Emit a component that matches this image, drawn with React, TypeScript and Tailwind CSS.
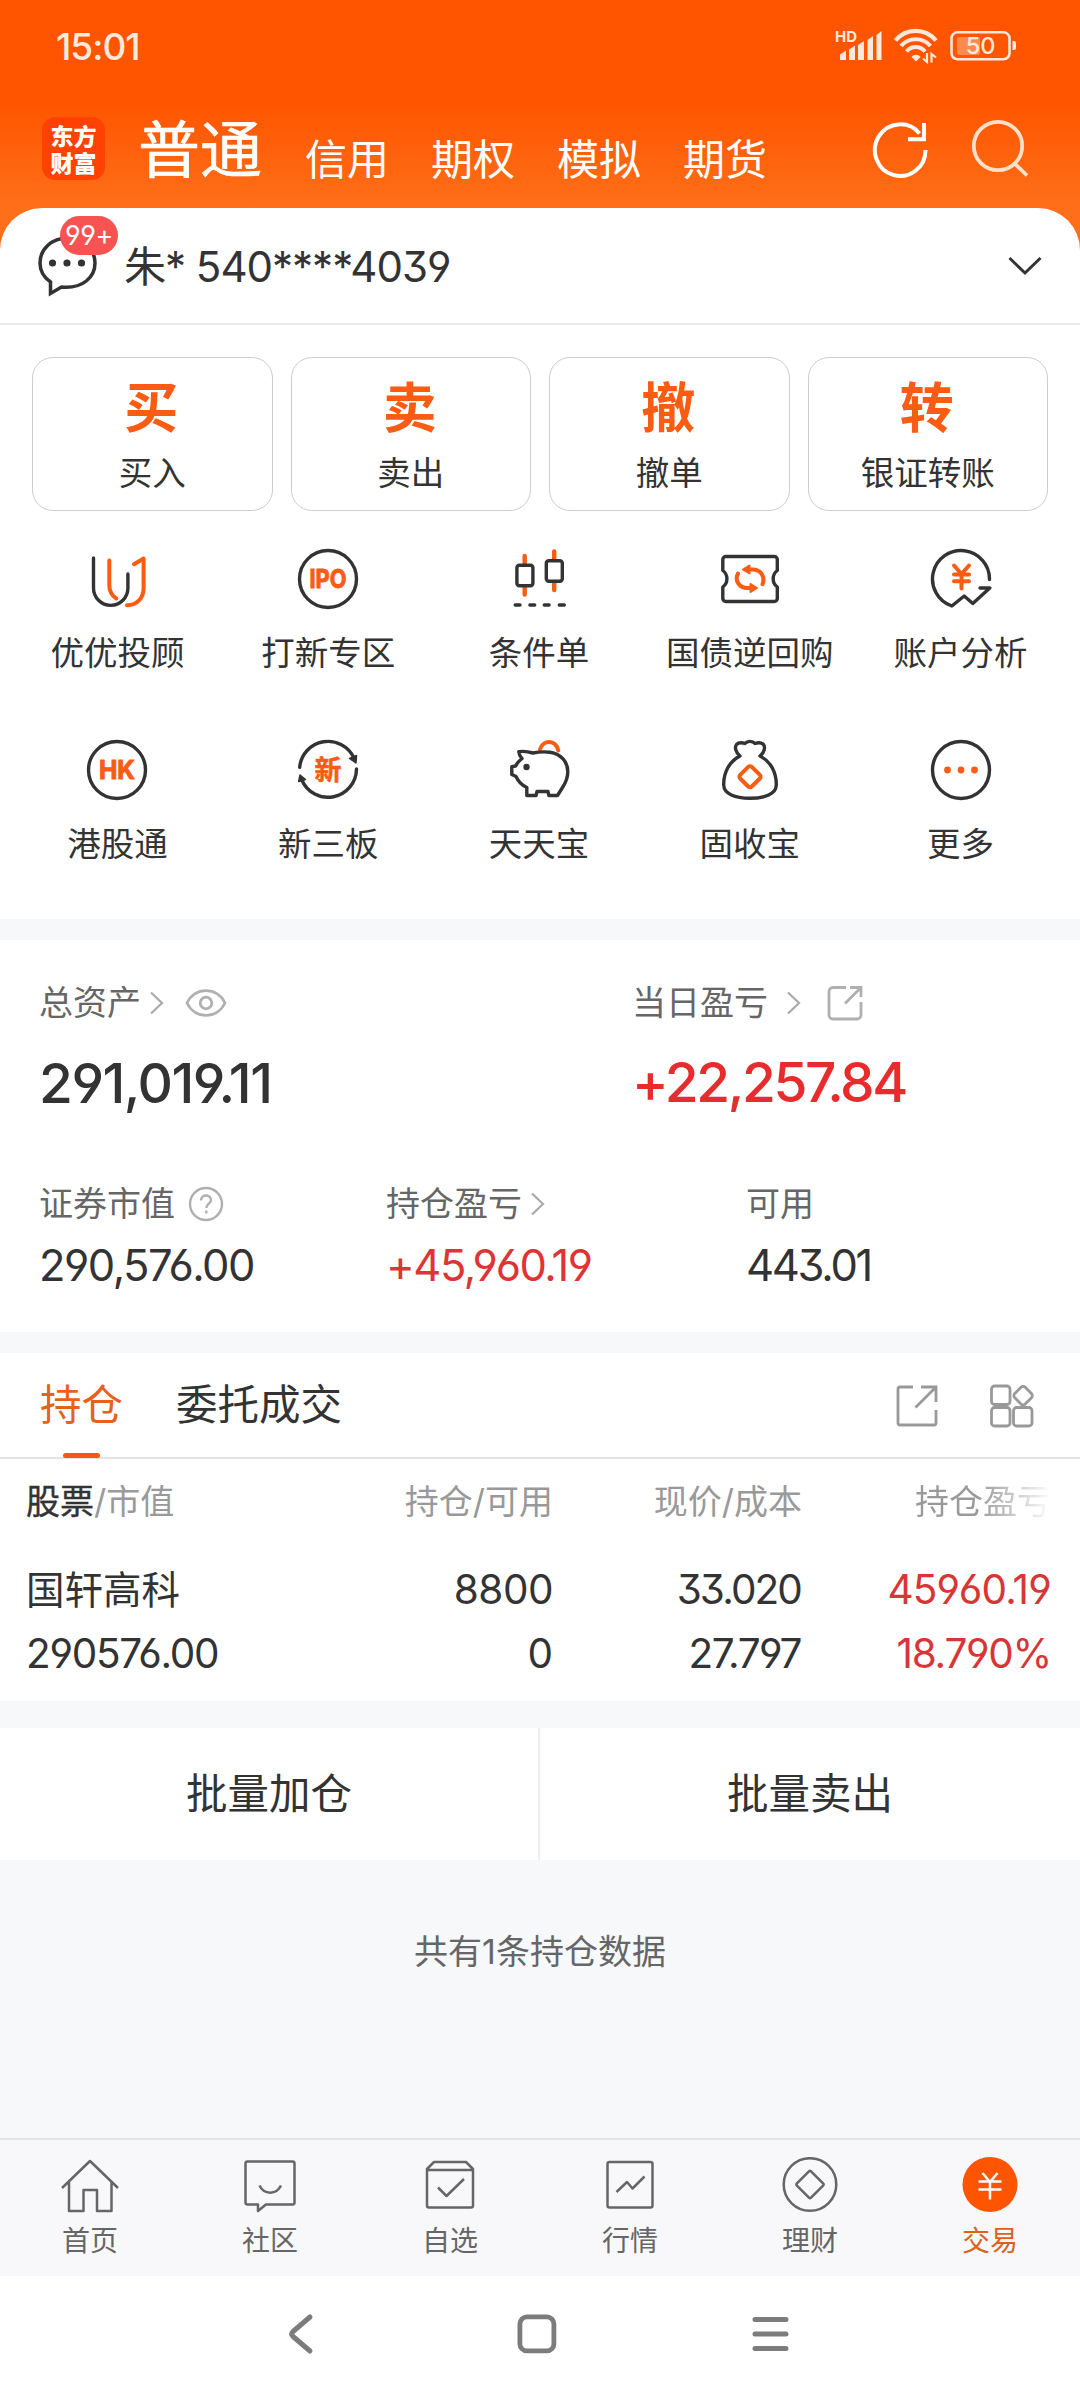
import type { ReactNode } from 'react';

const DARK = '#333333';
const ORANGE = '#f95c12';

const accountTabs = ['信用', '期权', '模拟', '期货'];

const mainActions = [
  { glyph: '买', label: '买入' },
  { glyph: '卖', label: '卖出' },
  { glyph: '撤', label: '撤单' },
  { glyph: '转', label: '银证转账' },
];

const Icon = ({ children }: { children: ReactNode }) => (
  <svg
    width="64"
    height="64"
    viewBox="0 0 64 64"
    fill="none"
    stroke={DARK}
    strokeWidth="3.4"
    strokeLinecap="round"
    strokeLinejoin="round"
  >
    {children}
  </svg>
);

const AdvisorIcon = () => (
  <Icon>
    <path d="M8.5 11V41a17.2 17.4 0 0 0 34.4 0V27" />
    <path d="M24.3 13.5V38c0 6 2.5 10.5 7 13.5" stroke={ORANGE} strokeWidth="4" />
    <path d="M42 58.3C52 58.5 58.6 51 58.6 41V11.5L49 17.2" stroke={ORANGE} strokeWidth="4" />
  </Icon>
);

const IpoIcon = () => (
  <Icon>
    <circle cx="32" cy="32" r="28.5" />
    <text
      x="32"
      y="41"
      textAnchor="middle"
      textLength="37"
      lengthAdjust="spacingAndGlyphs"
      fill={ORANGE}
      stroke={ORANGE}
      strokeWidth="1"
      className="font-['Inter'] text-[26px] font-bold"
    >
      IPO
    </text>
  </Icon>
);

const ConditionIcon = () => (
  <Icon>
    <path d="M17.7 9V17M17.7 40V47.5M47.2 4.5V12M47.2 36V43" stroke={ORANGE} strokeWidth="4.4" />
    <rect x="9.9" y="18.3" width="16" height="20.5" rx="2.5" />
    <rect x="39.3" y="13.8" width="16" height="20.5" rx="2.5" />
    <path d="M8.2 58H13M22.9 58H27.7M37.3 58H42.1M52.3 58H57.3" />
  </Icon>
);

const BondIcon = () => (
  <Icon>
    <path d="M4.8 12.5a3 3 0 0 1 3-3H56.3a3 3 0 0 1 3 3V23.5c-5.5 4-5.5 12.5 0 16.5V51.5a3 3 0 0 1-3 3H7.8a3 3 0 0 1-3-3V40c5.5-4 5.5-12.5 0-16.5Z" />
    <path d="M28 22.5H34.5C43 22.5 47.5 30 44.5 37.2" stroke={ORANGE} strokeWidth="4" />
    <path d="M36 41H29.5C21 41 16.5 33.5 20 26.5" stroke={ORANGE} strokeWidth="4" />
    <path d="M25 22.5L31.5 18.5V26.5ZM39 41L32.5 37V45Z" fill={ORANGE} stroke={ORANGE} strokeWidth="2" />
  </Icon>
);

const AnalysisIcon = () => (
  <Icon>
    <path d="M60.5 32.5A28.5 28.5 0 1 0 22.8 59L35.2 49L43.8 56.5L60.8 41H51" />
    <path d="M25 18.5L32.5 27L40 18.5M25 27.5H40M25 34.2H40M32.5 27V41.5" stroke={ORANGE} strokeWidth="4" />
  </Icon>
);

const HkIcon = () => (
  <Icon>
    <circle cx="32" cy="32" r="28.5" />
    <text
      x="32"
      y="41"
      textAnchor="middle"
      textLength="36"
      lengthAdjust="spacingAndGlyphs"
      fill={ORANGE}
      stroke={ORANGE}
      strokeWidth="1"
      className="font-['Inter'] text-[26px] font-bold"
    >
      HK
    </text>
  </Icon>
);

const NewBoardIcon = () => (
  <Icon>
    <path d="M3.7 29.3A28.5 28.5 0 0 1 58 20M60.5 31A28.5 28.5 0 0 1 5.8 42" />
    <path d="M53.5 20.5L60.5 17.5L60 25ZM2.7 43.5L4 37L9.5 41.5Z" fill={DARK} strokeWidth="1.5" />
    <text
      x="32"
      y="41.5"
      textAnchor="middle"
      fill={ORANGE}
      stroke={ORANGE}
      strokeWidth="0.5"
      className="font-['Noto_Sans_CJK_SC'] text-[27px] font-bold"
    >
      新
    </text>
  </Icon>
);

const PiggyIcon = () => (
  <Icon>
    <path d="M33 11.3C36 1.5 48.5 1 51.3 12.5" stroke={ORANGE} strokeWidth="4" />
    <path
      d="M11.8 13.7C17 12.8 21 13.5 26 15C31 14 38 13.6 43 14.3C54 16 60.8 24 60.8 33.5C60.8 39 58.5 45 55.5 49.5L50.5 57.5H41.8L41 53.5H30L29 57.5H19.8V49.5C15.5 47.5 11.5 44 9 38.5L4.8 36.5V28.7L8.7 28C9.5 25.5 12 23 15 20.5C13 18.5 12 16.5 11.8 13.7Z"
      fill="#fff"
    />
    <circle cx="19.5" cy="29" r="3.2" fill={DARK} stroke="none" />
  </Icon>
);

const BagIcon = () => (
  <Icon>
    <path d="M22 18C17.5 14.5 16.5 9 18.5 6.5C20.5 4.5 24 4.5 27 5.5C29.5 2.6 34.5 2.6 37 5.5C40 4.5 43.5 4.5 45.5 6.5C47.5 9 46.5 14.5 42 18C53 23.5 58.5 35 58.3 47C58 56 47 60.3 32 60.3C17 60.3 6 56 5.7 47C5.5 35 11 23.5 22 18Z" />
    <rect
      x="23.8"
      y="30.5"
      width="16.4"
      height="16.4"
      rx="2.5"
      transform="rotate(45 32 38.7)"
      stroke={ORANGE}
      strokeWidth="4"
    />
  </Icon>
);

const MoreIcon = () => (
  <Icon>
    <circle cx="32" cy="32" r="28.5" />
    <g fill={ORANGE} stroke="none">
      <circle cx="18.5" cy="32" r="3.4" />
      <circle cx="32" cy="32" r="3.4" />
      <circle cx="45.5" cy="32" r="3.4" />
    </g>
  </Icon>
);

const shortcuts = [
  { label: '优优投顾', icon: <AdvisorIcon /> },
  { label: '打新专区', icon: <IpoIcon /> },
  { label: '条件单', icon: <ConditionIcon /> },
  { label: '国债逆回购', icon: <BondIcon /> },
  { label: '账户分析', icon: <AnalysisIcon /> },
  { label: '港股通', icon: <HkIcon /> },
  { label: '新三板', icon: <NewBoardIcon /> },
  { label: '天天宝', icon: <PiggyIcon /> },
  { label: '固收宝', icon: <BagIcon /> },
  { label: '更多', icon: <MoreIcon /> },
];

const ChevronRight = () => (
  <svg width="16" height="24" viewBox="0 0 16 24" fill="none" stroke="#aaaaaa" strokeWidth="2.2">
    <path d="M2 1.5L13 12L2 22.5" />
  </svg>
);

const StatusBar = () => (
  <div className="flex h-[92px] items-center justify-between pl-[56px] pr-[63px] text-[#ffe9da]">
    <span className="text-[37px] font-medium tracking-[-1px]">15:01</span>
    <svg width="182" height="36" viewBox="0 0 182 36" fill="none">
      <text x="0" y="13.5" textLength="22" lengthAdjust="spacingAndGlyphs" fill="#ffe9da" className="font-['Inter'] text-[15px] font-bold">
        HD
      </text>
      <g fill="#ffe9da">
        <path d="M5 26.5l6-4V32H5ZM14 21.500l6-4V32H14ZM23 17l6-4V32H23ZM32.500 12l5.500-4V32H32.500ZM41.500 7l5-4V32H41.500Z" />
      </g>
      <g stroke="#ffe9da" strokeWidth="4.200">
        <path d="M60.500 12.500C71 -0.300 90 -0.300 101 12.500" />
        <path d="M66 18C73.500 9 88 9 95.500 18" />
        <path d="M71.500 23.500C76.500 17.500 85 17.500 90 23.500" />
      </g>
      <path d="M76.500 29C78.500 26 83.500 26 85.500 29L81 33.500Z" fill="#ffe9da" />
      <path d="M92 25V34L88 30.500M96.500 34.500V26L101 29.500" stroke="#ffe9da" strokeWidth="2.200" />
      <rect x="116.500" y="4.300" width="58" height="27" rx="6" stroke="#ffe9da" strokeWidth="2.600" />
      <rect x="122" y="9" width="23" height="18" rx="2" fill="#ff8a50" />
      <path d="M177.500 13H179a2 2 0 0 1 2 2V20a2 2 0 0 1-2 2H177.500Z" fill="#ffe9da" />
      <text x="145.500" y="26.300" textAnchor="middle" fill="#ffe9da" className="font-['Inter'] text-[23.5px] font-medium">
        50
      </text>
    </svg>
  </div>
);

const TopTabs = () => (
  <div className="flex h-[116px] pl-[42px] text-white">
    <div className="mt-[25px] grid h-[63px] w-[63px] place-content-center rounded-[13px] bg-[#ff4203] text-center font-['Noto_Sans_CJK_SC'] text-[23px] font-black leading-[27px]">
      <div>东方</div>
      <div>财富</div>
    </div>
    <span className="ml-[33px] mt-[27px] text-[62px] leading-[64px] [-webkit-text-stroke:0.6px_#fff]">普通</span>
    <div className="ml-[43px] mt-[47px] flex gap-[42px] text-[42px] leading-[42px]">
      {accountTabs.map((tab) => (
        <span key={tab}>{tab}</span>
      ))}
    </div>
    <svg className="ml-[104px] mt-[26px]" width="62" height="62" viewBox="0 0 62 62" fill="none" stroke="#fff" strokeWidth="4">
      <path d="M54.500 32A25.300 25.800 0 1 1 48.500 15.500" />
      <path d="M53 5V21.300H37" />
    </svg>
    <svg className="ml-[37px] mt-[25px]" width="62" height="62" viewBox="0 0 62 62" fill="none" stroke="#ffe0c8" strokeWidth="3.800">
      <circle cx="28" cy="29" r="24.200" />
      <path d="M44.500 46.500L57 58.500" />
    </svg>
  </div>
);

const AccountRow = () => (
  <div className="flex h-[117px] items-center border-b-2 border-[#ebebeb] pl-[37px] pr-[38px]">
    <div className="relative">
      <svg width="62" height="62" viewBox="0 0 62 62" fill="none" stroke={DARK} strokeWidth="3.500">
        <path d="M30.500 3C15 3 3 14 3 28C3 35.500 7 42.500 13.500 47V58.500L24.500 52C46 54 58 42 58 28C58 14 46 3 30.500 3Z" />
        <g fill={DARK} stroke="none">
          <circle cx="15.500" cy="28" r="3.600" />
          <circle cx="30" cy="28" r="3.600" />
          <circle cx="44.500" cy="28" r="3.600" />
        </g>
      </svg>
      <div className="absolute left-[23px] top-[-19px] flex h-[39px] w-[58px] items-center justify-center rounded-full bg-[#f75353] text-[27px] tracking-[-0.5px] text-white">
        99+
      </div>
    </div>
    <span className="ml-[25px] flex-1 whitespace-pre pt-[3px] text-[42px] tracking-[-1px] text-[#333]">朱* 540****4039</span>
    <svg width="34" height="20" viewBox="0 0 34 20" fill="none" stroke={DARK} strokeWidth="3">
      <path d="M1.500 2L17 17L32.500 2" />
    </svg>
  </div>
);

const ExportIcon = ({ size, stroke, width }: { size: number; stroke: string; width: number }) => (
  <svg width={size} height={size} viewBox="0 0 42 42" fill="none" stroke={stroke} strokeWidth={width} strokeLinejoin="round">
    <path d="M17 2H4a2 2 0 0 0-2 2V38a2 2 0 0 0 2 2H38a2 2 0 0 0 2-2V25" />
    <path d="M25 2H40V17M40 2L19.500 22.500" strokeLinejoin="miter" />
  </svg>
);

const Assets = () => (
  <section className="mt-[21px] h-[392px] bg-white text-[#333]">
    <div className="flex pl-[39px] pt-[42px]">
      <div className="w-[593px]">
        <div className="flex h-[42px] items-center text-[34px] text-[#666]">
          总资产
          <span className="ml-[8px]">
            <ChevronRight />
          </span>
          <svg className="ml-[20px]" width="42" height="30" viewBox="0 0 42 30" fill="none" stroke="#b0b0b0" strokeWidth="2.800">
            <path d="M2 15C10 -1.500 32 -1.500 40 15C32 31.500 10 31.500 2 15Z" />
            <circle cx="21" cy="15" r="5.800" />
          </svg>
        </div>
        <div className="mt-[28px] flex h-[62px] items-center text-[55px] font-[450] tracking-[-1.500px]">291,019.11</div>
      </div>
      <div>
        <div className="flex h-[42px] items-center text-[34px] text-[#666]">
          当日盈亏
          <span className="ml-[18px] mr-[25px]">
            <ChevronRight />
          </span>
          <svg width="36" height="36" viewBox="0 0 36 36" fill="none" stroke="#b0b0b0" strokeWidth="2.800">
            <path d="M19 2.500H6a4 4 0 0 0-4 4V30a4 4 0 0 0 4 4H30a4 4 0 0 0 4-4V17" />
            <path d="M23 2.500H34V12M33 3.500L18 18.500" />
          </svg>
        </div>
        <div className="mt-[27px] flex h-[62px] items-center text-[55px] font-[450] tracking-[-2.400px] text-[#e62c2c]">
          +22,257.84
        </div>
      </div>
    </div>
    <div className="flex pl-[39px] pt-[69px]">
      <div className="w-[347px]">
        <div className="flex h-[42px] items-center text-[34px] text-[#666]">
          证券市值
          <svg className="ml-[13px]" width="36" height="36" viewBox="0 0 36 36" fill="none" stroke="#b0b0b0" strokeWidth="2.400">
            <circle cx="18" cy="18" r="16" />
            <path d="M13 14.500C13 7.500 23.500 8 23 14.500C22.500 17.500 18.300 18 18.300 22M18.300 24.500V27.500" />
          </svg>
        </div>
        <div className="mt-[16px] flex h-[50px] items-center text-[43.500px] tracking-[-1.500px]">290,576.00</div>
      </div>
      <div className="w-[360px]">
        <div className="flex h-[42px] items-center text-[34px] text-[#666]">
          持仓盈亏
          <span className="ml-[8px]">
            <ChevronRight />
          </span>
        </div>
        <div className="mt-[16px] flex h-[50px] items-center text-[43.500px] tracking-[-1.500px] text-[#dd3535]">
          +45,960.19
        </div>
      </div>
      <div>
        <div className="flex h-[42px] items-center text-[34px] text-[#666]">可用</div>
        <div className="mt-[16px] flex h-[50px] items-center text-[43.500px] tracking-[-2.300px]">443.01</div>
      </div>
    </div>
  </section>
);

const Holdings = () => (
  <section className="mt-[21px] bg-white text-[#333]">
    <div className="flex h-[106px] items-center border-b-2 border-[#e4e4e4] pl-[40px] pr-[45px] text-[41.500px]">
      <div className="relative flex h-full items-center pt-[2px] text-[#e8601c]">
        持仓
        <div className="absolute bottom-[-1px] left-[23px] h-[5px] w-[37px] rounded-full bg-[#f25a14]" />
      </div>
      <span className="ml-[53px] flex-1 pt-[2px]">委托成交</span>
      <div className="flex items-center gap-[51px] pt-[2px]">
        <ExportIcon size={42} stroke="#999999" width={2.800} />
        <svg width="46" height="44" viewBox="0 0 46 44" fill="none" stroke="#999999" strokeWidth="2.800">
          <rect x="2.500" y="2" width="18.500" height="18.500" rx="3" />
          <rect x="2.500" y="23.500" width="18.500" height="18.500" rx="3" />
          <rect x="24.500" y="23.500" width="18.500" height="18.500" rx="3" />
          <rect x="26.700" y="4.200" width="14.800" height="14.800" rx="3" transform="rotate(45 34.100 11.600)" />
        </svg>
      </div>
    </div>

    <div className="flex h-[84px] items-center pl-[26px] pt-[2px] text-[34px] text-[#999]">
      <span className="w-[295px]">
        <span className="text-[#333] [-webkit-text-stroke:0.4px_#333]">股票</span>/市值
      </span>
      <span className="w-[232px] text-right">持仓/可用</span>
      <span className="w-[249px] text-right">现价/成本</span>
      <span className="ml-[113px] w-[137px] bg-linear-to-r from-[#999] from-45% to-white to-100% bg-clip-text text-transparent">
        持仓盈亏
      </span>
    </div>

    <div className="flex h-[158px] pl-[26px] pt-[15px] text-[40.500px] leading-[64px]">
      <div className="w-[296px]">
        <div className="text-[38.500px]">国轩高科</div>
        <div className="tracking-[-1.300px]">290576.00</div>
      </div>
      <div className="w-[231px] text-right">
        <div className="tracking-[-0.500px]">8800</div>
        <div>0</div>
      </div>
      <div className="w-[248px] text-right">
        <div className="tracking-[-1.900px]">33.020</div>
        <div className="tracking-[-1.500px]">27.797</div>
      </div>
      <div className="w-[250px] text-right text-[#d83636]">
        <div className="tracking-[-0.800px]">45960.19</div>
        <div className="tracking-[-1.300px]">18.790%</div>
      </div>
    </div>
  </section>
);

const navItems = [
  {
    label: '首页',
    icon: <path d="M2 31L30 4L58 31M9 25V54H23.500V33H37V54H51.500V25" />,
  },
  {
    label: '社区',
    icon: (
      <path d="M7.500 4.500H52.500a2 2 0 0 1 2 2V45.500a2 2 0 0 1-2 2H26L18 54V47.500H7.500a2 2 0 0 1-2-2V6.500a2 2 0 0 1 2-2ZM19.500 28.500C24 38 36.500 38 41 28.500" />
    ),
  },
  {
    label: '自选',
    icon: (
      <path d="M7 13H53V48.500a2 2 0 0 1-2 2H9a2 2 0 0 1-2-2V12L14 5H46L53 12V13M18 30.500L26.500 39L44 22" />
    ),
  },
  {
    label: '行情',
    icon: (
      <>
        <rect x="7.500" y="5" width="45" height="45.500" rx="2" />
        <path d="M16.500 35L27 25L32.500 31.500L44.500 19.500" />
      </>
    ),
  },
  {
    label: '理财',
    icon: (
      <>
        <circle cx="30" cy="27.500" r="26.300" />
        <rect x="20" y="17.500" width="20" height="20" rx="1.500" transform="rotate(45 30 27.500)" />
      </>
    ),
  },
  {
    label: '交易',
    active: true,
    icon: (
      <>
        <circle cx="30" cy="27.500" r="27.500" fill="#ff5500" stroke="none" />
        <path d="M22.500 16L30 25L37.500 16M18.500 24.500H41.500M18.500 32.500H41.500M30 25V42.500" stroke="#fff" />
      </>
    ),
  },
];

const BottomNav = () => (
  <nav className="flex h-[138px] border-t-2 border-[#e2e3e5] bg-[#f8f8fa] pt-[17px]">
    {navItems.map((item) => (
      <div
        key={item.label}
        className={
          item.active
            ? 'flex flex-1 flex-col items-center text-[28px] leading-[34px] text-[#dd6020]'
            : 'flex flex-1 flex-col items-center text-[28px] leading-[34px] text-[#666]'
        }
      >
        <svg width="60" height="58" viewBox="0 0 60 58" fill="none" stroke="#666" strokeWidth="2.500" strokeLinejoin="round">
          {item.icon}
        </svg>
        <span className="mt-[9px]">{item.label}</span>
      </div>
    ))}
  </nav>
);

const SystemNav = () => (
  <div className="flex h-[124px] items-center bg-white pb-[8px] pl-[285px] pr-[290px]">
    <div className="flex w-full items-center justify-between">
      <svg width="30" height="44" viewBox="0 0 30 44" fill="none" stroke="#7c7c7c" strokeWidth="5" strokeLinecap="round" strokeLinejoin="round">
        <path d="M25 5L8 19.500Q5.500 22 8 24.500L25 39" />
      </svg>
      <svg className="ml-[6px]" width="40" height="40" viewBox="0 0 40 40" fill="none" stroke="#7c7c7c" strokeWidth="4.800">
        <rect x="2.900" y="2.900" width="34" height="34" rx="7" />
      </svg>
      <svg width="38" height="38" viewBox="0 0 38 38" stroke="#7c7c7c" strokeWidth="5" strokeLinecap="round">
        <path d="M3 4.500H34M3 19H34M3 33.500H34" />
      </svg>
    </div>
  </div>
);

export default function App() {
  return (
    <div className="flex h-[2400px] w-[1080px] flex-col overflow-hidden bg-[#f7f8fa] font-['Inter','Noto_Sans_CJK_SC',sans-serif] leading-none [font-feature-settings:'cv03','cv04','cv09']">
      <div className="bg-[linear-gradient(180deg,#ff5500_0px,#ff5500_102px,#ff6e18_204px,#ff6e18_270px)]">
        <StatusBar />
        <TopTabs />
        <section className="h-[711px] rounded-t-[42px] bg-white">
          <AccountRow />
          <div className="grid grid-cols-4 gap-[18px] px-[32px] pt-[32px]">
            {mainActions.map((action) => (
              <div
                key={action.label}
                className="flex h-[154px] flex-col items-center rounded-[21px] border border-[#cccccc]"
              >
                <span className="mr-[2px] mt-[19px] font-['Noto_Sans_CJK_SC'] text-[54px] font-bold leading-[56px] text-[#f95c12]">
                  {action.glyph}
                </span>
                <span className="mt-[20px] text-[33.500px] leading-[40px] text-[#333]">{action.label}</span>
              </div>
            ))}
          </div>
          <div className="grid grid-cols-5 pl-[12px] pr-[14px] pt-[36px]">
            {shortcuts.map((item) => (
              <div key={item.label} className="flex h-[191px] flex-col items-center">
                {item.icon}
                <span className="mt-[22px] whitespace-nowrap text-[33.500px] leading-[40px] text-[#333]">{item.label}</span>
              </div>
            ))}
          </div>
        </section>
      </div>
      <Assets />
      <Holdings />
      <div className="mt-[27px] flex h-[132px] bg-white text-[41.500px] text-[#333]">
        <div className="flex w-[540px] items-center justify-center border-r-2 border-[#eeeeee] pt-[2px]">批量加仓</div>
        <div className="flex flex-1 items-center justify-center pt-[2px]">批量卖出</div>
      </div>
      <div className="flex-1 pt-[74px] text-center text-[34px] leading-[36px] text-[#666]">共有1条持仓数据</div>
      <BottomNav />
      <SystemNav />
    </div>
  );
}
